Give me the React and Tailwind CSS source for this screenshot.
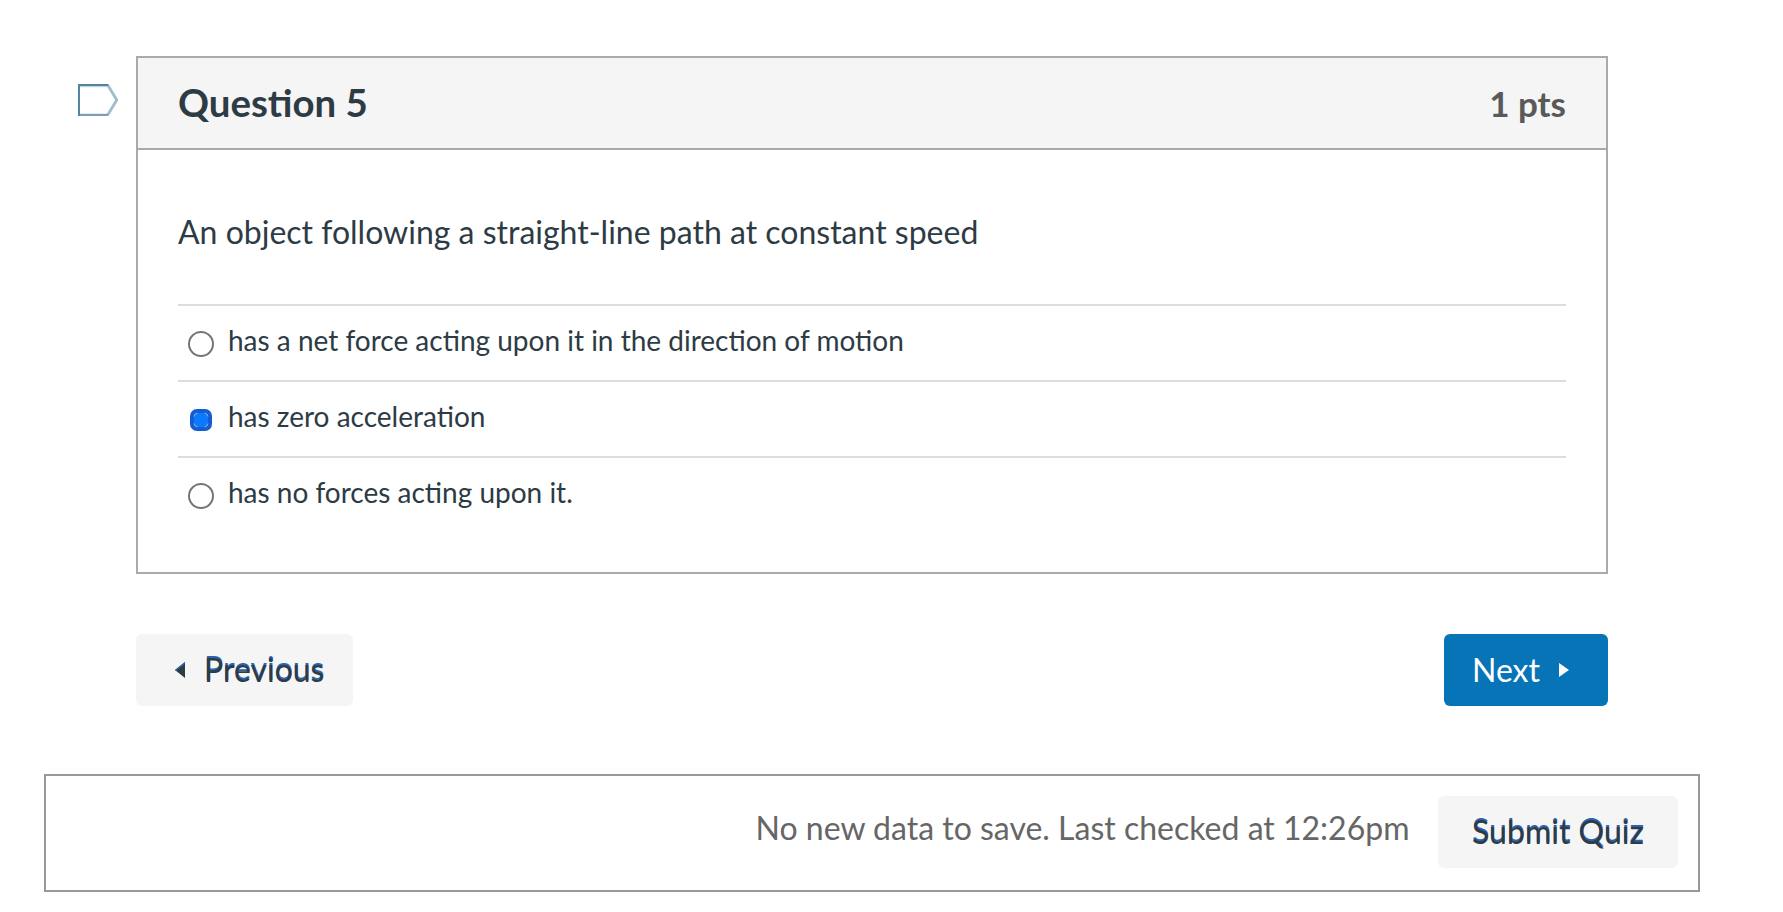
import { useState } from "react";

const answers = [
  { id: 1, text: "has a net force acting upon it in the direction of motion" },
  { id: 2, text: "has zero acceleration" },
  { id: 3, text: "has no forces acting upon it." },
];

const FlagIcon = () => (
  <svg width="40" height="32" viewBox="0 0 40 32" fill="none">
    <path d="M30 1.5L38.8 16L30 30.5" stroke="#a3bccb" strokeWidth="2.8" />
    <path d="M2 2.5H29.5" stroke="#c4d4de" strokeWidth="1.4" />
    <path d="M1 31H30.5" stroke="#7b9fb5" strokeWidth="2.4" />
    <path d="M1 32V1H30.5" stroke="#5584a1" strokeWidth="2" />
  </svg>
);

const Radio = ({ checked }) => {
  if (checked) {
    return (
      <svg width="26" height="26" viewBox="0 0 26 26">
        <rect x="2" y="2" width="22" height="22" rx="7" fill="#155dce" />
        <rect x="6" y="6" width="14" height="14" rx="4.5" fill="#0a7aff" />
        <path
          d="M6 9.5Q6.5 6.5 9.5 6M16.5 6Q19.5 6.5 20 9.5M20 16.5Q19.5 19.5 16.5 20M9.5 20Q6.5 19.5 6 16.5"
          fill="none"
          stroke="#8abcf8"
          strokeWidth="0.9"
        />
      </svg>
    );
  }
  return (
    <svg width="26" height="26" viewBox="0 0 26 26">
      <circle cx="13" cy="13" r="12" fill="#fff" stroke="#767676" strokeWidth="2" />
    </svg>
  );
};

export default function App() {
  const [selected, setSelected] = useState(2);

  return (
    <div className="h-[912px] overflow-hidden bg-white pt-14 font-['Lato',sans-serif] text-[#2d3b45]">

      {/* QUESTION */}
      <div className="flex items-start pl-[78px]">
        <button className="mt-7 mr-[18px] shrink-0">
          <FlagIcon />
        </button>

        <div className="h-[518px] w-[1472px] border-2 border-[#aaaaaa]">
          <div className="flex h-[92px] items-center justify-between border-b-2 border-[#aaaaaa] bg-[#f5f5f5] px-10">
            <h2 className="mb-[2px] text-[38.4px] leading-[48px] font-bold">Question 5</h2>
            <span className="text-[35px] leading-[48px] font-bold text-[#595959]">1 pts</span>
          </div>

          <div className="px-10 pt-[58px]">
            <p className="text-[32px] leading-[48px]">
              An object following a straight-line path at constant speed
            </p>

            <div className="mt-12">
              {answers.map((a) => (
                <label
                  key={a.id}
                  className="flex h-[76px] items-center border-t-2 border-[#dddddd] pl-[10px] text-[28px]"
                  onClick={() => setSelected(a.id)}
                >
                  <span className="mt-[2px] mr-[14px]">
                    <Radio checked={selected === a.id} />
                  </span>
                  <span className="mb-[6px] leading-[40px]">{a.text}</span>
                </label>
              ))}
            </div>
          </div>
        </div>
      </div>

      {/* PREVIOUS / NEXT */}
      <div className="mt-[60px] ml-[136px] flex w-[1472px] justify-between text-[32px]">
        <button className="flex h-[72px] w-[217px] items-center rounded-[6px] bg-[#f5f5f5] pl-[39px] [text-shadow:0_-2px_0_#2b62b0]">
          <svg width="10" height="16" viewBox="0 0 10 16">
            <path d="M10 0V16L0 8Z" fill="#2d3b45" />
            <path d="M0 8L10 0V2L1 9Z" fill="#2b5ea6" />
          </svg>
          <span className="ml-[19px]">Previous</span>
        </button>
        <button className="flex h-[72px] w-[164px] items-center rounded-[6px] bg-[#0874b8] pl-7 text-white">
          <span>Next</span>
          <svg className="ml-[19px]" width="10" height="14" viewBox="0 0 10 14">
            <path d="M0 0V14L10 7Z" fill="#fff" />
          </svg>
        </button>
      </div>

      {/* SUBMIT BAR */}
      <div className="mt-[68px] ml-11 flex h-[118px] w-[1656px] items-start justify-end border-2 border-[#999999] pt-5 pr-5 text-[32px]">
        <span className="mt-[8px] mr-[28.5px] leading-[48px] text-[#666666]">
          No new data to save. Last checked at 12:26pm
        </span>
        <button className="h-[72px] w-[240px] rounded-[6px] bg-[#f5f5f5] [text-shadow:0_-2px_0_#2b62b0]">
          Submit Quiz
        </button>
      </div>

    </div>
  );
}
